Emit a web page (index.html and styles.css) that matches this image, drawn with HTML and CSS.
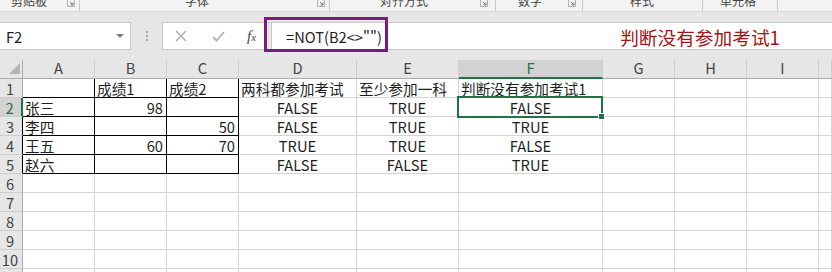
FILE: index.html
```html
<!DOCTYPE html>
<html lang="zh-CN">
<head>
<meta charset="utf-8">
<title>判断没有参加考试</title>
<link rel="stylesheet" href="styles.css">
</head>
<body>
<div class="ribbon">
  <div class="grp g1"><span class="glabel">剪贴板</span><svg class="launch" width="8" height="8" viewBox="0 0 8 8"><path d="M0.5 0.5h7v7h-7z" fill="none" stroke="#b0b0b0"/><path d="M3 3l3 3M6 3.5V6H3.5" fill="none" stroke="#7a7a7a"/></svg></div>
  <div class="grp g2"><span class="glabel">字体</span><svg class="launch" width="8" height="8" viewBox="0 0 8 8"><path d="M0.5 0.5h7v7h-7z" fill="none" stroke="#b0b0b0"/><path d="M3 3l3 3M6 3.5V6H3.5" fill="none" stroke="#7a7a7a"/></svg></div>
  <div class="grp g3"><span class="glabel">对齐方式</span><svg class="launch" width="8" height="8" viewBox="0 0 8 8"><path d="M0.5 0.5h7v7h-7z" fill="none" stroke="#b0b0b0"/><path d="M3 3l3 3M6 3.5V6H3.5" fill="none" stroke="#7a7a7a"/></svg></div>
  <div class="grp g4"><span class="glabel">数字</span><svg class="launch" width="8" height="8" viewBox="0 0 8 8"><path d="M0.5 0.5h7v7h-7z" fill="none" stroke="#b0b0b0"/><path d="M3 3l3 3M6 3.5V6H3.5" fill="none" stroke="#7a7a7a"/></svg></div>
  <div class="grp g5"><span class="glabel">样式</span></div>
  <div class="grp g6"><span class="glabel">单元格</span></div>
  <div class="grp g7"></div>
</div>

<div class="fbar">
  <div class="namebox"><span class="nb-text">F2</span><span class="dd"></span></div>
  <div class="dots"><i></i><i></i><i></i></div>
  <div class="fxbox">
    <svg class="ico" width="12" height="12" viewBox="0 0 12 12"><path d="M1 1L11 11M11 1L1 11" stroke="#a8a8a8" stroke-width="1.3" fill="none"/></svg>
    <svg class="ico ico-ok" width="13" height="11" viewBox="0 0 13 11"><path d="M1 6l3.6 3.6L12 1" stroke="#b4b4b4" stroke-width="1.8" fill="none"/></svg>
    <span class="fx">f<span class="fx-x">x</span></span>
  </div>
  <div class="split"></div>
  <div class="finput"><span class="formula">=NOT(B2&lt;&gt;"")</span><span class="note">判断没有参加考试1</span></div>
  <div class="hl"></div>
</div>

<div class="sheet">
  <div class="grid">
    <div class="corner"><span class="tri"></span></div>
    <div class="ch">A</div><div class="ch">B</div><div class="ch">C</div><div class="ch">D</div><div class="ch">E</div><div class="ch ch-sel">F</div><div class="ch">G</div><div class="ch">H</div><div class="ch">I</div><div class="ch"></div>

    <div class="rh">1</div>
    <div class="c bb br"></div><div class="c l bb br">成绩1</div><div class="c l bb br">成绩2</div><div class="c l">两科都参加考试</div><div class="c l">至少参加一科</div><div class="c l">判断没有参加考试1</div><div class="c"></div><div class="c"></div><div class="c"></div><div class="c"></div>

    <div class="rh rh-sel">2</div>
    <div class="c l bb br">张三</div><div class="c r bb br">98</div><div class="c bb br"></div><div class="c m">FALSE</div><div class="c m">TRUE</div><div class="c m">FALSE</div><div class="c"></div><div class="c"></div><div class="c"></div><div class="c"></div>

    <div class="rh rh-b">3</div>
    <div class="c l bb br">李四</div><div class="c bb br"></div><div class="c r bb br">50</div><div class="c m">FALSE</div><div class="c m">TRUE</div><div class="c m">TRUE</div><div class="c"></div><div class="c"></div><div class="c"></div><div class="c"></div>

    <div class="rh rh-b">4</div>
    <div class="c l bb br">王五</div><div class="c r bb br">60</div><div class="c r bb br">70</div><div class="c m">TRUE</div><div class="c m">TRUE</div><div class="c m">FALSE</div><div class="c"></div><div class="c"></div><div class="c"></div><div class="c"></div>

    <div class="rh rh-b">5</div>
    <div class="c l bb br">赵六</div><div class="c bb br"></div><div class="c bb br"></div><div class="c m">FALSE</div><div class="c m">FALSE</div><div class="c m">TRUE</div><div class="c"></div><div class="c"></div><div class="c"></div><div class="c"></div>

    <div class="rh">6</div>
    <div class="c"></div><div class="c"></div><div class="c"></div><div class="c"></div><div class="c"></div><div class="c"></div><div class="c"></div><div class="c"></div><div class="c"></div><div class="c"></div>
    <div class="rh">7</div>
    <div class="c"></div><div class="c"></div><div class="c"></div><div class="c"></div><div class="c"></div><div class="c"></div><div class="c"></div><div class="c"></div><div class="c"></div><div class="c"></div>
    <div class="rh">8</div>
    <div class="c"></div><div class="c"></div><div class="c"></div><div class="c"></div><div class="c"></div><div class="c"></div><div class="c"></div><div class="c"></div><div class="c"></div><div class="c"></div>
    <div class="rh">9</div>
    <div class="c"></div><div class="c"></div><div class="c"></div><div class="c"></div><div class="c"></div><div class="c"></div><div class="c"></div><div class="c"></div><div class="c"></div><div class="c"></div>
    <div class="rh">10</div>
    <div class="c"></div><div class="c"></div><div class="c"></div><div class="c"></div><div class="c"></div><div class="c"></div><div class="c"></div><div class="c"></div><div class="c"></div><div class="c"></div>
    <div class="rh"></div>
    <div class="c"></div><div class="c"></div><div class="c"></div><div class="c"></div><div class="c"></div><div class="c"></div><div class="c"></div><div class="c"></div><div class="c"></div><div class="c"></div>
  </div>
  <div class="sel"><i class="handle"></i></div>
</div>
</body>
</html>
```

FILE: styles.css
```css
* { box-sizing: border-box; }
html, body {
  margin: 0;
  padding: 0;
  width: 832px;
  height: 272px;
  overflow: hidden;
  background: #e6e6e6;
  font-family: "Noto Sans CJK SC", "Noto Sans", sans-serif;
  color: #1e1e1e;
}

/* ribbon group labels (cut off at top, as in the window) */
.ribbon {
  display: flex;
  height: 12px;
  background: #f3f3f3;
  border-bottom: 1px solid #d6d6d6;
  overflow: hidden;
}
.grp {
  display: flex;
  align-items: flex-start;
  height: 11px;
  border-right: 1px solid #c8c8c8;
  flex: none;
}
.glabel {
  font-size: 12px;
  line-height: 12px;
  margin-top: -5px;
  color: #444;
  white-space: nowrap;
}
.launch { margin-left: auto; margin-top: -1px; flex: none; }
.g1 { width: 80px; padding-left: 11px; padding-right: 4px; }
.g2 { width: 250px; padding-left: 105px; padding-right: 4px; }
.g3 { width: 166px; padding-left: 50px; padding-right: 7px; }
.g4 { width: 87px; padding-left: 22px; padding-right: 6px; }
.g5 { width: 120px; padding-left: 47px; }
.g6 { width: 75px; padding-left: 17px; }
.g7 { flex: 1; border-right: none; }

/* formula bar */
.fbar {
  position: relative;
  display: flex;
  height: 28px;
  margin-top: 10px;
  margin-bottom: 10px;
}
.namebox {
  width: 131px;
  flex: none;
  background: #fff;
  border: 1px solid #c6c6c6;
  border-left: none;
  display: flex;
  align-items: center;
  padding-left: 6px;
  padding-right: 6px;
}
.nb-text { font-size: 14.67px; color: #222; }
.dd {
  margin-left: auto;
  width: 0; height: 0;
  border-left: 4px solid transparent;
  border-right: 4px solid transparent;
  border-top: 4px solid #7a7a7a;
}
.dots {
  width: 31px;
  flex: none;
  display: flex;
  flex-direction: column;
  align-items: center;
  justify-content: center;
  gap: 2px;
}
.dots i { display: block; width: 2px; height: 2px; background: #a6a6a6; }
.fxbox {
  width: 106px;
  flex: none;
  background: #fff;
  border: 1px solid #c6c6c6;
  border-right: none;
  display: flex;
  align-items: center;
  padding-left: 12px;
}
.ico { flex: none; }
.ico-ok { margin-left: 25px; }
.fx {
  margin-left: 22px;
  font-family: "Liberation Serif", serif;
  font-style: italic;
  font-size: 15px;
  color: #444;
}
.fx-x { font-size: 11px; }
.split {
  width: 4px;
  flex: none;
  background: #ececec;
  border-top: 1px solid #c6c6c6;
  border-bottom: 1px solid #c6c6c6;
  border-left: 1px solid #d8d8d8;
  border-right: 1px solid #c6c6c6;
}
.finput {
  flex: 1;
  background: #fff;
  border: 1px solid #c6c6c6;
  border-left: none;
  border-right: none;
  display: flex;
  align-items: center;
  padding-left: 14px;
  padding-right: 52px;
}
.formula { font-size: 14.67px; color: #1e1e1e; }
.note {
  margin-left: auto;
  font-size: 18.7px;
  color: #a31515;
  white-space: nowrap;
}
.hl {
  position: absolute;
  left: 264px;
  top: -5px;
  width: 124px;
  height: 35px;
  border: 3px solid #7d1a7f;
}

/* sheet */
.sheet {
  position: relative;
  height: 212px;
  overflow: hidden;
  background: #fff;
}
.grid {
  display: grid;
  grid-template-columns: 23px 72px 72px 72px 118px 102px 144px 72px 72px 72px 13px;
  grid-auto-rows: 19px;
  background: #fff;
  width: 832px;
}
.corner {
  background: #e6e6e6;
  border-right: 1px solid #ababab;
  border-bottom: 1px solid #ababab;
  position: relative;
}
.tri {
  position: absolute;
  right: 2px;
  bottom: 4px;
  width: 0; height: 0;
  border-left: 11px solid transparent;
  border-bottom: 11px solid #b4b4b4;
}
.ch {
  background: #e6e6e6;
  border-right: 1px solid #cdcdcd;
  border-bottom: 1px solid #ababab;
  text-align: center;
  font-size: 14.67px;
  line-height: 16px;
  color: #444;
}
.ch-sel {
  background: #d2d2d2;
  border-bottom: 2px solid #217346;
  color: #217346;
}
.rh {
  background: #e6e6e6;
  border-right: 1px solid #ababab;
  border-bottom: 1px solid #cdcdcd;
  text-align: center;
  padding-right: 2px;
  font-size: 14.67px;
  line-height: 17px;
  padding-top: 1px;
  color: #444;
}
.rh-sel {
  background: #d2d2d2;
  color: #217346;
  border-right: 2px solid #217346;
}
.rh-b { border-right-color: #000; }
.c {
  border-right: 1px solid #d4d4d4;
  border-bottom: 1px solid #d4d4d4;
  font-size: 14.67px;
  line-height: 17px;
  padding-top: 1px;
  white-space: nowrap;
  overflow: hidden;
}
.l { text-align: left; padding-left: 2px; }
.r { text-align: right; padding-right: 3px; }
.m { text-align: center; }
.bb { border-bottom-color: #000; }
.br { border-right-color: #000; }

.sel {
  position: absolute;
  left: 457px;
  top: 36px;
  width: 146px;
  height: 22px;
  border: 2px solid #217346;
}
.handle {
  position: absolute;
  right: -4px;
  bottom: -4px;
  width: 7px;
  height: 7px;
  background: #217346;
  border: 1px solid #fff;
}
```
